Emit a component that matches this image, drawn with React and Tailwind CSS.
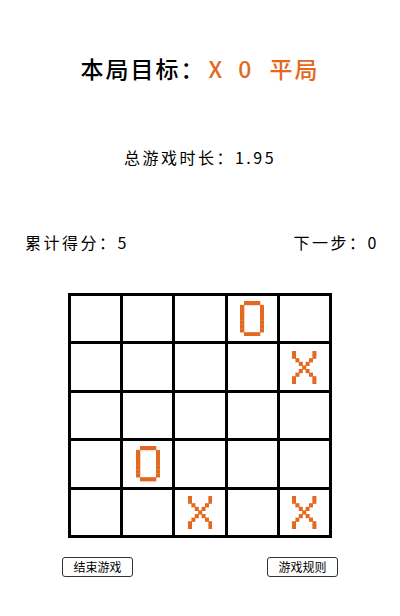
import React from "react";

const ORANGE = "#e2691f";

// pixel-style glyphs for the board
const X_ROWS = [
  "X.....X",
  "X.....X",
  ".X...X.",
  "..X.X..",
  "...X...",
  "..X.X..",
  ".X...X.",
  "X.....X",
  "X.....X",
];

const O_ROWS = [
  ".XXXX.",
  "X....X",
  "X....X",
  "X....X",
  "X....X",
  "X....X",
  "X....X",
  "X....X",
  ".XXXX.",
];

function Pixels({ rows, uw, uh, grow = 0 }) {
  const rects = [];
  rows.forEach((row, y) => {
    row.split("").forEach((c, x) => {
      if (c === "X") {
        rects.push(<rect key={x + "-" + y} x={x * uw} y={y * uh} width={uw + grow} height={uh + grow} />);
      }
    });
  });
  const w = rows[0].length * uw + grow;
  const h = rows.length * uh + grow;
  return (
    <svg width={w} height={h} viewBox={`0 0 ${w} ${h}`} fill={ORANGE}>
      {rects}
    </svg>
  );
}

const board = [
  ["", "", "", "O", ""],
  ["", "", "", "", "X"],
  ["", "", "", "", ""],
  ["", "O", "", "", ""],
  ["", "", "X", "", "X"],
];

export default function App() {
  return (
    <div className="w-[400px] h-[616px] bg-white flex flex-col pt-[55px] text-black" style={{ fontFamily: '"Noto Sans CJK SC", "Liberation Sans", sans-serif' }}>
      <div className="h-[26px] flex items-center justify-center text-[23px] leading-none font-medium">
        <span className="tracking-[2px]">本局目标：</span>
        <span className="text-[#e2691f] ml-[3px]">X</span>
        <span className="text-[#e2691f] ml-[16px]">0</span>
        <span className="text-[#e2691f] ml-[18px] tracking-[2px]">平局</span>
      </div>

      <div className="mt-[66px] h-[20px] flex items-center justify-center text-[16px] tracking-[2.5px] leading-none">
        总游戏时长：1.95
      </div>

      <div className="mt-[65px] h-[20px] flex items-center justify-between pl-[25px] pr-[21px] text-[16px] tracking-[2.5px] leading-none">
        <span>累计得分：5</span>
        <span>下一步：0</span>
      </div>

      <div className="mt-[41px] mx-auto w-[264px] h-[245px] grid grid-cols-5 grid-rows-5 gap-[3px] p-[3px] bg-black">
        {board.flat().map((cell, i) => (
          <div key={i} className="bg-white flex items-center justify-center">
            {cell === "X" && <Pixels rows={X_ROWS} uw={3.4} uh={3.6} grow={0.6} />}
            {cell === "O" && <Pixels rows={O_ROWS} uw={4} uh={3.9} grow={0.3} />}
          </div>
        ))}
      </div>

      <div className="mt-[19px] flex justify-between px-[62px]">
        <button className="w-[71px] h-[20px] border-[1.5px] border-[#333] rounded-[3px] text-[12px] leading-none flex items-center justify-center bg-white">
          结束游戏
        </button>
        <button className="w-[71px] h-[20px] border-[1.5px] border-[#333] rounded-[3px] text-[12px] leading-none flex items-center justify-center bg-white">
          游戏规则
        </button>
      </div>
    </div>
  );
}
